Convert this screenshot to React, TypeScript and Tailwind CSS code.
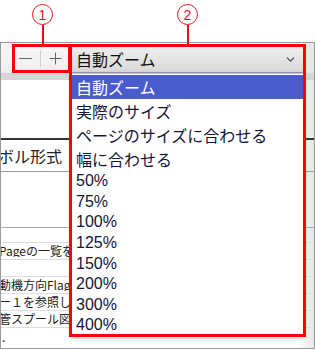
import { ChevronDown, Minus, Plus } from "lucide-react";

const jp = "font-['Noto_Sans_CJK_JP','Noto_Sans',sans-serif]";
const num = "font-['Liberation_Sans','Noto_Sans_CJK_JP',sans-serif]";

const options = [
  { label: "自動ズーム", tall: true },
  { label: "実際のサイズ", tall: true },
  { label: "ページのサイズに合わせる", tall: true },
  { label: "幅に合わせる", tall: true },
  { label: "50%" },
  { label: "75%" },
  { label: "100%" },
  { label: "125%" },
  { label: "150%" },
  { label: "200%" },
  { label: "300%" },
  { label: "400%" },
];

function Marker({ n, x }: { n: string; x: string }) {
  return (
    <div className={`absolute top-[4px] ${x} flex flex-col items-center`}>
      <div className={`flex h-[21px] w-[21px] items-center justify-center rounded-full border-[1.5px] border-[#e8101c] text-[14px] leading-none text-[#e8101c] ${num}`}>
        {n}
      </div>
      <div className="h-[19px] w-[2px] bg-[#e8101c]" />
    </div>
  );
}

export default function App() {
  return (
    <div className="relative h-[350px] w-[315px] overflow-hidden bg-white">
      <div className="h-[42px]" />

      {/* viewer frame */}
      <div className="flex h-[307px] w-[315px] flex-col border border-[#9a9a9a] bg-white">
        <div className="flex h-[30px] bg-gradient-to-b from-[#f8f8f8] to-[#eeeeee]">
          <div className="flex w-[70px] items-center pl-[10px] text-[#666]">
            <span className="flex w-[29px] justify-center">
              <Minus size={21} strokeWidth={1.2} />
            </span>
            <span className="h-[17px] w-px bg-[#cfcfcf]" />
            <span className="flex w-[29px] justify-center">
              <Plus size={19} strokeWidth={1.3} />
            </span>
          </div>
          <div className="ml-px mt-[3px] flex w-[231px] items-center justify-between border-b border-[#9a9a9a] bg-gradient-to-b from-[#eeeeee] to-[#d9d9d9] pl-[4px] pr-[6px]">
            <span className={`text-[16px] leading-none text-[#111] ${jp}`}>自動ズーム</span>
            <ChevronDown size={13} strokeWidth={2} className="text-[#444]" />
          </div>
          <div className="flex-1 bg-[#e8e8e8]" />
        </div>
        <div className="h-[7px] bg-[#d6d6d6]" />

        {/* document behind */}
        <div className={`flex flex-1 flex-col overflow-hidden bg-gradient-to-r from-white from-[95%] to-[#e6e6e6] text-[#222] ${jp}`}>
          <div className="h-[58px] shrink-0" />
          <div className="h-[2px] shrink-0 bg-[#333]" />
          <div className="flex h-[32px] shrink-0 items-center border-b border-[#999] text-[16px] leading-none">
            <span className="-ml-[3px] w-[70px] overflow-hidden whitespace-nowrap">ボル形式</span>
          </div>
          <div className="h-[56px] shrink-0 border-b border-[#aaa]" />
          <div className="h-[15px] shrink-0 border-b border-[#ddd]" />
          {["Pageの一覧を", "", "動機方向Flag", "ー１を参照し", "管スプール図"].map((t, i) => (
            <div
              key={i}
              className="flex h-[17px] shrink-0 items-center border-b border-[#ddd] text-[12px] leading-none whitespace-nowrap"
            >
              <span className="-ml-[2px] w-[71px] overflow-hidden">{t}</span>
            </div>
          ))}
          <div className="flex h-[17px] shrink-0 items-center pl-[1px] text-[12px] leading-none">.</div>
        </div>
      </div>

      {/* open dropdown list */}
      <div className="absolute left-[72px] top-[74px] h-[261px] w-[231px] overflow-hidden bg-white shadow-[0_2px_6px_rgba(0,0,0,0.35)]">
        <div className="h-px" />
        {options.map((o, i) => (
          <div
            key={o.label}
            className={`flex items-center pl-[4px] text-[16px] leading-none ${o.tall ? `h-[24px] ${jp}` : `h-[20.6px] ${num}`} ${
              i === 0 ? "bg-[#4a5bcc] text-white" : "text-[#14143a]"
            }`}
          >
            {o.label}
          </div>
        ))}
      </div>

      {/* annotations */}
      <Marker n="1" x="left-[32px]" />
      <Marker n="2" x="left-[177px]" />
      <div className="absolute left-[12px] top-[44px] h-[29px] w-[59px] border-[3px] border-[#ff0000]" />
      <div className="absolute left-[69px] top-[44px] h-[293px] w-[237px] border-[3px] border-[#ff0000]" />
    </div>
  );
}
